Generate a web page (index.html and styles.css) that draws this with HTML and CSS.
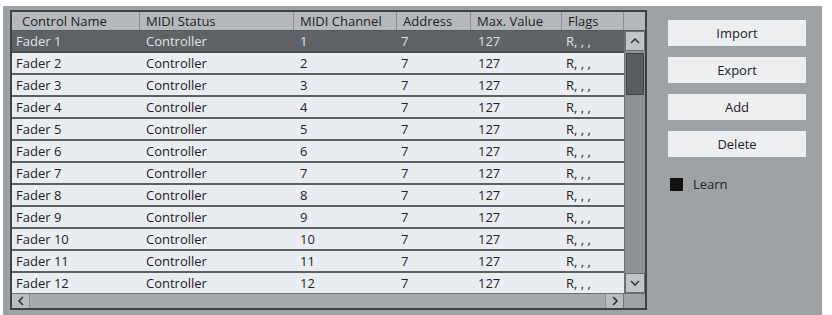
FILE: index.html
```html
<!DOCTYPE html>
<html>
<head>
<meta charset="utf-8">
<link rel="stylesheet" href="styles.css">
</head>
<body>
<div class="panel">
  <div class="grid">
    <div class="head">
      <div class="hc c1"><span class="pad">Control Name</span></div>
      <div class="hc c2">MIDI Status</div>
      <div class="hc c3">MIDI Channel</div>
      <div class="hc c4">Address</div>
      <div class="hc c5">Max. Value</div>
      <div class="hc c6">Flags</div>
      <div class="hc c7"></div>
    </div>
    <div class="body">
      <div class="rows">
        <div class="row sel"><div class="c1">Fader 1</div><div class="c2">Controller</div><div class="c3">1</div><div class="c4">7</div><div class="c5">127</div><div class="c6">R, , ,</div></div>
        <div class="row"><div class="c1">Fader 2</div><div class="c2">Controller</div><div class="c3">2</div><div class="c4">7</div><div class="c5">127</div><div class="c6">R, , ,</div></div>
        <div class="row"><div class="c1">Fader 3</div><div class="c2">Controller</div><div class="c3">3</div><div class="c4">7</div><div class="c5">127</div><div class="c6">R, , ,</div></div>
        <div class="row"><div class="c1">Fader 4</div><div class="c2">Controller</div><div class="c3">4</div><div class="c4">7</div><div class="c5">127</div><div class="c6">R, , ,</div></div>
        <div class="row"><div class="c1">Fader 5</div><div class="c2">Controller</div><div class="c3">5</div><div class="c4">7</div><div class="c5">127</div><div class="c6">R, , ,</div></div>
        <div class="row"><div class="c1">Fader 6</div><div class="c2">Controller</div><div class="c3">6</div><div class="c4">7</div><div class="c5">127</div><div class="c6">R, , ,</div></div>
        <div class="row"><div class="c1">Fader 7</div><div class="c2">Controller</div><div class="c3">7</div><div class="c4">7</div><div class="c5">127</div><div class="c6">R, , ,</div></div>
        <div class="row"><div class="c1">Fader 8</div><div class="c2">Controller</div><div class="c3">8</div><div class="c4">7</div><div class="c5">127</div><div class="c6">R, , ,</div></div>
        <div class="row"><div class="c1">Fader 9</div><div class="c2">Controller</div><div class="c3">9</div><div class="c4">7</div><div class="c5">127</div><div class="c6">R, , ,</div></div>
        <div class="row"><div class="c1">Fader 10</div><div class="c2">Controller</div><div class="c3">10</div><div class="c4">7</div><div class="c5">127</div><div class="c6">R, , ,</div></div>
        <div class="row"><div class="c1">Fader 11</div><div class="c2">Controller</div><div class="c3">11</div><div class="c4">7</div><div class="c5">127</div><div class="c6">R, , ,</div></div>
        <div class="row last"><div class="c1">Fader 12</div><div class="c2">Controller</div><div class="c3">12</div><div class="c4">7</div><div class="c5">127</div><div class="c6">R, , ,</div></div>
      </div>
      <div class="vscroll">
        <div class="arrow up"><svg width="10" height="6" viewBox="0 0 10 6"><path d="M1 5 L5 1 L9 5" fill="none" stroke="#333" stroke-width="1.6"/></svg></div>
        <div class="thumb"></div>
        <div class="track"></div>
        <div class="arrow down"><svg width="10" height="6" viewBox="0 0 10 6"><path d="M1 1 L5 5 L9 1" fill="none" stroke="#333" stroke-width="1.6"/></svg></div>
      </div>
    </div>
    <div class="hscroll">
      <div class="harrow"><svg width="6" height="10" viewBox="0 0 6 10"><path d="M5 1 L1 5 L5 9" fill="none" stroke="#333" stroke-width="1.6"/></svg></div>
      <div class="htrack"></div>
      <div class="harrow"><svg width="6" height="10" viewBox="0 0 6 10"><path d="M1 1 L5 5 L1 9" fill="none" stroke="#333" stroke-width="1.6"/></svg></div>
      <div class="corner"></div>
    </div>
  </div>
  <div class="side">
    <div class="btn">Import</div>
    <div class="btn">Export</div>
    <div class="btn">Add</div>
    <div class="btn">Delete</div>
    <div class="learn"><span class="box"></span><span>Learn</span></div>
  </div>
</div>
</body>
</html>
```
FILE: styles.css
```css
html, body {
  margin: 0;
  padding: 0;
  background: #ffffff;
}
body {
  font-family: "Open Sans", "Noto Sans", sans-serif;
  font-size: 13px;
  color: #1e2124;
  width: 832px;
  height: 315px;
  overflow: hidden;
}
.panel {
  margin: 6px 0 0 3px;
  width: 819px;
  height: 309px;
  background: #9ea2a4;
  display: flex;
  padding: 4px 0 0 7px;
  box-sizing: border-box;
  gap: 21px;
}
.grid {
  width: 637px;
  height: 300px;
  border: 2px solid #3e4245;
  box-sizing: border-box;
  display: flex;
  flex-direction: column;
  background: #9ea2a4;
}
.head {
  display: flex;
  height: 19px;
  background: #b5b9bb;
  border-bottom: 1px solid #55595c;
  line-height: 18px;
  color: #222;
}
.hc {
  border-right: 1px solid #8a8e91;
  box-sizing: border-box;
  padding-left: 6px;
  white-space: nowrap;
  overflow: hidden;
}
.hc.c1 { padding-left: 10px; }
.hc.c7 { border-right: none; }
.c1 { width: 128px; }
.c2 { width: 154px; }
.c3 { width: 103px; }
.c4 { width: 74px; }
.c5 { width: 91px; }
.c6 { width: 62px; }
.c7 { width: 21px; }
.body {
  display: flex;
  height: 262px;
}
.rows {
  width: 612px;
  display: flex;
  flex-direction: column;
}
.row {
  display: flex;
  height: 20px;
  line-height: 20px;
  background: #e9edf2;
  border-bottom: 2px solid #5c6064;
  color: #1e2124;
  white-space: nowrap;
}
.row > div {
  box-sizing: border-box;
  padding-left: 6px;
  overflow: hidden;
}
.row > .c1 { padding-left: 4px; }
.row > .c4 { padding-left: 4px; }
.row > .c5 { padding-left: 7px; }
.row > .c6 { padding-left: 4px; }
.row.sel {
  background: #5f6367;
  color: #dfe3e6;
  border-bottom-color: #4a4e51;
}
.row.last { border-bottom: none; height: 21px; }
.vscroll {
  width: 21px;
  display: flex;
  flex-direction: column;
  background: #8f9396;
  border-left: 1px solid #6e7275;
  box-sizing: border-box;
}
.arrow {
  height: 20px;
  background: #c1c5c8;
  display: flex;
  align-items: center;
  justify-content: center;
  border: 1px solid #6a6e71;
  box-sizing: border-box;
}
.thumb {
  height: 40px;
  margin: 2px 1px;
  background: #595d60;
  border: 1px solid #3f4346;
}
.track { flex: 1; }
.hscroll {
  display: flex;
  height: 15px;
  background: #a6aaac;
  border-top: 1px solid #6e7275;
}
.harrow {
  width: 17px;
  display: flex;
  align-items: center;
  justify-content: center;
  background: #b9bdbf;
  border-right: 1px solid #8a8e91;
}
.harrow + .htrack + .harrow { border-left: 1px solid #8a8e91; border-right: none; }
.htrack { flex: 1; }
.corner {
  width: 21px;
  background: #9ea2a4;
  border-left: 1px solid #6e7275;
}
.side {
  display: flex;
  flex-direction: column;
  padding-top: 10px;
  width: 138px;
}
.btn {
  height: 26px;
  line-height: 26px;
  background: #eceef0;
  text-align: center;
  color: #1f2226;
  margin-bottom: 11px;
  font-size: 13px;
}
.learn {
  display: flex;
  align-items: center;
  gap: 10px;
  margin-top: 7px;
  padding-left: 2px;
  color: #1f2226;
}
.box {
  width: 13px;
  height: 13px;
  background: #111;
  display: inline-block;
}
```
